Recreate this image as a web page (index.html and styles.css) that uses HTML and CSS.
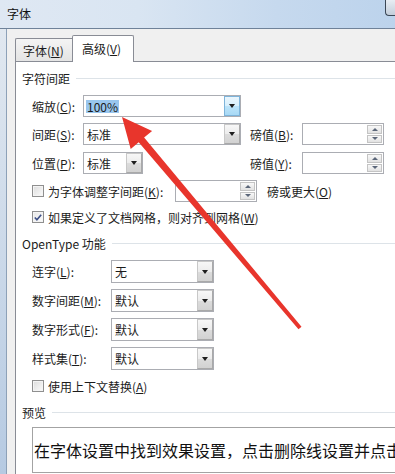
FILE: index.html
```html
<!DOCTYPE html>
<html lang="zh-CN">
<head>
<meta charset="utf-8">
<title>字体</title>
<link rel="stylesheet" href="styles.css">
</head>
<body>
<div class="window">
  <div class="titlebar">
    <div class="title">字体</div>
    <div class="closebtn"></div>
  </div>
  <div class="frame">
    <div class="edge"></div>
    <div class="client">
      <div class="tabs">
        <div class="tab">字体(<u>N</u>)</div>
        <div class="tab active">高级(<u>V</u>)</div>
      </div>
      <div class="panel">
        <div class="heading h1">字符间距</div>

        <div class="grid-row r1">
          <div class="lbl">缩放(<u>C</u>):</div>
          <div class="combo wide hover"><span class="val"><span class="sel">100%</span></span><span class="dd"><i class="tri"></i></span></div>
        </div>
        <div class="grid-row r2">
          <div class="lbl">间距(<u>S</u>):</div>
          <div class="combo wide"><span class="val">标准</span><span class="dd"><i class="tri"></i></span></div>
          <div class="lbl2">磅值(<u>B</u>):</div>
          <div class="spin"><span class="sval"></span><span class="sbtns"><span class="sb"><i class="up"></i></span><span class="sb"><i class="down"></i></span></span></div>
        </div>
        <div class="grid-row r3">
          <div class="lbl">位置(<u>P</u>):</div>
          <div class="combo narrow"><span class="val">标准</span><span class="dd"><i class="tri"></i></span></div>
          <div class="lbl2">磅值(<u>Y</u>):</div>
          <div class="spin"><span class="sval"></span><span class="sbtns"><span class="sb"><i class="up"></i></span><span class="sb"><i class="down"></i></span></span></div>
        </div>
        <div class="cb-row r4">
          <span class="cb"></span>
          <span class="cblbl kern">为字体调整字间距(<u>K</u>):</span>
          <div class="spin"><span class="sval"></span><span class="sbtns"><span class="sb"><i class="up"></i></span><span class="sb"><i class="down"></i></span></span></div>
          <span class="after">磅或更大(<u>O</u>)</span>
        </div>
        <div class="cb-row r5">
          <span class="cb checked"><svg width="11" height="11" viewBox="0 0 11 11"><path d="M2 5.5 L4.3 8 L9 2.5" fill="none" stroke="#3d4f86" stroke-width="1.8"/></svg></span>
          <span class="cblbl">如果定义了文档网格，则对齐到网格(<u>W</u>)</span>
        </div>

        <div class="heading h2">OpenType 功能</div>

        <div class="ot-row o1">
          <div class="lbl ot">连字(<u>L</u>):</div>
          <div class="combo otc"><span class="val">无</span><span class="dd"><i class="tri"></i></span></div>
        </div>
        <div class="ot-row o2">
          <div class="lbl ot">数字间距(<u>M</u>):</div>
          <div class="combo otc"><span class="val">默认</span><span class="dd"><i class="tri"></i></span></div>
        </div>
        <div class="ot-row o2">
          <div class="lbl ot">数字形式(<u>F</u>):</div>
          <div class="combo otc"><span class="val">默认</span><span class="dd"><i class="tri"></i></span></div>
        </div>
        <div class="ot-row o2">
          <div class="lbl ot">样式集(<u>T</u>):</div>
          <div class="combo otc"><span class="val">默认</span><span class="dd"><i class="tri"></i></span></div>
        </div>
        <div class="cb-row r6">
          <span class="cb"></span>
          <span class="cblbl">使用上下文替换(<u>A</u>)</span>
        </div>

        <div class="heading h3">预览</div>
        <div class="preview">在字体设置中找到效果设置，点击删除线设置并点击</div>
      </div>
    </div>
  </div>
</div>
<svg class="arrow" width="395" height="474" viewBox="0 0 395 474">
  <polygon points="122,117 152.1,130.9 144.1,137.6 301.5,326.7 298.5,329.3 138.7,142.2 130.7,148.9" fill="#e8352c"/>
</svg>
</body>
</html>
```
FILE: styles.css
```css
* { box-sizing: border-box; }
html, body { margin: 0; padding: 0; }
body {
  width: 395px;
  height: 474px;
  overflow: hidden;
  position: relative;
  background: #f0f0f0;
  font-family: "Noto Sans CJK SC", "Noto Sans", sans-serif;
  font-size: 12px;
  color: #1c1c1c;
}
u { text-decoration: underline; text-underline-offset: 1px; }

.window { display: flex; flex-direction: column; height: 474px; width: 395px; }

.titlebar {
  height: 29px;
  flex: none;
  border-bottom: 1px solid #6f8299;
  display: flex;
  justify-content: space-between;
  align-items: flex-start;
  background: linear-gradient(90deg, #dfe8f3 0%, #d9e5f2 35%, #c6d9ee 70%, #bcd3ec 100%);
}
.title { padding-left: 7px; line-height: 28px; font-size: 12px; color: #111; }
.closebtn {
  width: 10px;
  height: 16px;
  border-left: 1px solid #3b4756;
  border-bottom: 1px solid #3b4756;
  border-radius: 0 0 0 4px;
  background: linear-gradient(#e8edf3, #c3cedb);
}

.frame { flex: 1; display: flex; min-height: 0; }
.edge {
  width: 7px;
  flex: none;
  background: linear-gradient(#e1e8f0, #b6cae2);
  border-right: 1px solid #8da1b8;
}
.client { flex: 1; padding-left: 8px; display: flex; flex-direction: column; min-width: 0; }

.tabs { height: 32px; flex: none; display: flex; align-items: flex-end; }
.tab {
  width: 57px;
  height: 23px;
  border: 1px solid #898c95;
  border-right: none;
  border-bottom: none;
  background: linear-gradient(#f4f4f4, #e4e4e4);
  display: flex;
  align-items: center;
  padding-left: 7px;
  border-radius: 2px 0 0 0;
}
.tab.active {
  width: 62px;
  height: 27px;
  border-right: 1px solid #898c95;
  background: #fff;
  margin-bottom: -1px;
  padding-left: 9px;
  padding-bottom: 2px;
  position: relative;
  z-index: 1;
  border-radius: 2px 2px 0 0;
}

.panel {
  flex: 1;
  background: #fff;
  border-top: 1px solid #898c95;
  border-left: 1px solid #898c95;
  padding: 7px 0 0 6px;
  display: flex;
  flex-direction: column;
  min-width: 0;
}

.heading {
  height: 18px;
  display: flex;
  align-items: center;
  white-space: nowrap;
  color: #1c1c1c;
}
.heading::after {
  content: "";
  flex: 1;
  height: 1px;
  background: #dde3e8;
  margin-left: 6px;
}
.h2 { margin-top: 8px; }
.h3 { margin-top: 8px; }

.grid-row {
  display: grid;
  grid-template-columns: 51px 158px 61px 82px;
  align-items: center;
  padding-left: 10px;
  height: 22px;
}
.r1 { margin-top: 8px; }
.r2 { margin-top: 6px; }
.r3 { margin-top: 7px; }
.lbl { white-space: nowrap; }
.lbl2 { padding-left: 9px; white-space: nowrap; }

.combo {
  height: 22px;
  border: 1px solid #abadb3;
  display: flex;
  align-items: stretch;
  background: #fff;
}
.combo.wide { width: 158px; }
.combo.narrow { width: 60px; }
.val { flex: 1; padding-left: 3px; display: flex; align-items: center; white-space: nowrap; }
.sel { background: #99c6ee; line-height: 13px; padding: 0 1px; margin-left: -1px; }
.dd {
  width: 16px;
  border: 1px solid #a9a9a9;
  border-top-color: #c8c8c8;
  border-left-color: #c8c8c8;
  background: linear-gradient(#f7f7f7 0%, #ececec 50%, #dcdcdc 51%, #d2d2d2 100%);
  display: flex;
  align-items: center;
  justify-content: center;
}
.combo.hover .dd {
  border-color: #7eb4da;
  background: linear-gradient(#eaf6fd 0%, #d7effc 50%, #bce4fa 51%, #a8d9f5 100%);
}
.tri {
  width: 0;
  height: 0;
  border-left: 3.5px solid transparent;
  border-right: 3.5px solid transparent;
  border-top: 4px solid #1e1e1e;
}

.spin {
  width: 82px;
  height: 22px;
  border: 1px solid #abadb3;
  display: flex;
  background: #fff;
}
.sval { flex: 1; }
.sbtns { width: 16px; display: flex; flex-direction: column; padding: 1px 1px 1px 0; gap: 1px; }
.sb {
  flex: 1;
  border: 1px solid #c4c4c4;
  background: linear-gradient(#f8f8f8, #e2e2e2);
  display: flex;
  align-items: center;
  justify-content: center;
}
.up, .down { width: 0; height: 0; border-left: 3px solid transparent; border-right: 3px solid transparent; }
.up { border-bottom: 3px solid #5b6679; }
.down { border-top: 3px solid #5b6679; }

.cb-row { display: flex; align-items: center; padding-left: 10px; height: 18px; }
.r4 { margin-top: 6px; height: 22px; }
.r5 { margin-top: 6px; }
.r6 { margin-top: 7px; }
.cb {
  width: 12px;
  height: 12px;
  flex: none;
  border: 1px solid #8f8f8f;
  background: linear-gradient(135deg, #dcdcdc, #fbfbfb);
  box-shadow: inset 0 0 0 1px #f4f4f4;
  display: flex;
  align-items: center;
  justify-content: center;
}
.cb.checked { background: linear-gradient(135deg, #e6e6e6, #fcfcfc); }
.cblbl { margin-left: 4px; white-space: nowrap; }
.cblbl.kern { width: 127px; }
.after { margin-left: 10px; white-space: nowrap; }

.ot-row { display: flex; align-items: center; padding-left: 10px; height: 23px; }
.o1 { margin-top: 8px; }
.o2 { margin-top: 6px; }
.lbl.ot { width: 79px; }
.combo.otc { width: 103px; height: 23px; }

.preview {
  margin-top: 6px;
  margin-left: 10px;
  width: 420px;
  height: 46px;
  flex: none;
  border: 1px solid #a3a3a3;
  background: #fff;
  font-size: 16px;
  line-height: 44px;
  padding-left: 1px;
  white-space: nowrap;
  color: #111;
}

.arrow { position: absolute; left: 0; top: 0; pointer-events: none; }
```
